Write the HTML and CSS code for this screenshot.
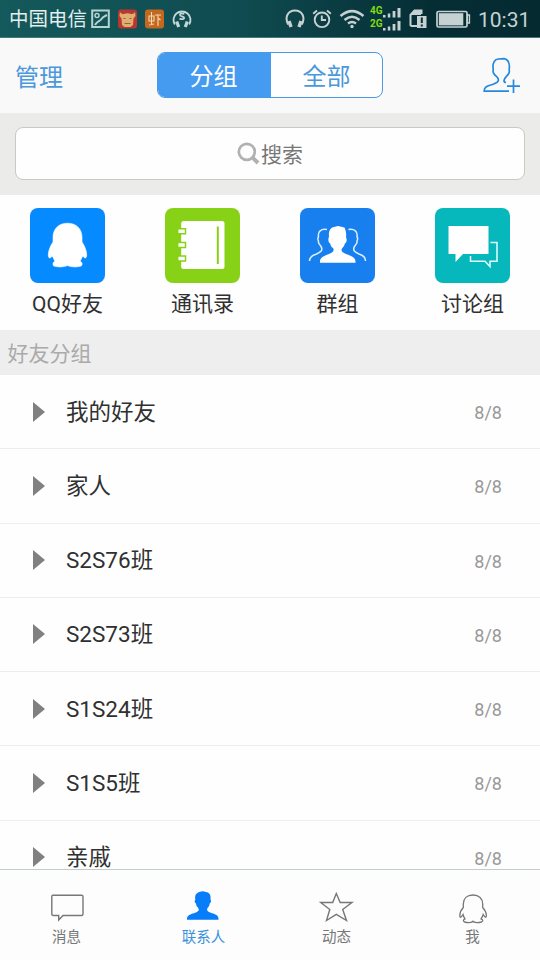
FILE: index.html
```html
<!DOCTYPE html>
<html lang="zh-CN">
<head>
<meta charset="utf-8">
<title>联系人</title>
<link rel="stylesheet" href="styles.css">
</head>
<body>
<div class="app">
  <div class="status">
    <span class="carrier">中国电信</span>
    <div class="notices">
      <svg width="19" height="20" viewBox="0 0 19 20" fill="none" stroke="#b5d3cf" stroke-width="2"><rect x="1.200" y="1.500" width="16.600" height="16.500"/><circle cx="6" cy="6.500" r="2" stroke-width="1.500"/><path d="M4 16C6 12 8.500 12.500 10 10.500C12 7.500 14 7 16 6"/></svg>
      <svg width="19" height="20" viewBox="0 0 19 20"><rect y=".5" width="19" height="19" rx="3" fill="#b93631"/><path d="M2 3Q3 5.500 6 5Q9.500 3.500 13 5Q16 5.500 17 3L17.500 7L15.500 9.500L15 16L12.500 18H6.500L4 16L3.500 9.500L1.500 7Z" fill="#dfae70"/><path d="M5.500 9.500h2M11.500 9.500h2M6.500 14.500h6" stroke="#a15a39" stroke-width="1" fill="none"/></svg>
      <svg width="19" height="20" viewBox="0 0 19 20"><rect y=".5" width="19" height="19" rx="3" fill="#c4681d"/><path d="M4 7h5v5H4zM6.500 3v13M4 16l5-1M10 6h6M13 6v11M13 9l2.500 2" fill="none" stroke="#f1d8b6" stroke-width="1.100"/></svg>
      <svg width="20" height="20" viewBox="0 0 20 20" fill="none" stroke="#c4d7d6" stroke-width="1.800"><path d="M2.800 15.500A8.500 8.500 0 1 1 17.200 15.500"/><path d="M4.700 12.500l2 5.500M15.300 12.500l-2 5.500" stroke-width="3.200"/><path d="M12.300 5Q8 3.500 8 6C8 7.800 12.300 6.800 12.200 9Q11.500 11 7.500 9.600"/></svg>
    </div>
    <div class="system">
      <svg class="phones" width="20" height="20" viewBox="0 0 20 20" fill="none" stroke="#c6d2d2" stroke-width="2"><path d="M3.200 15.500C-.8 8 3 1.500 10 1.500S20.800 8 16.800 15.500"/><path d="M4 12l2 6M16 12l-2 6" stroke-width="3.500"/></svg>
      <svg class="alarm" width="20" height="20" viewBox="0 0 20 20" fill="none" stroke="#c6d2d2" stroke-width="1.900"><circle cx="10" cy="10.800" r="7.300"/><path d="M9.800 6.500V11H14M1.200 4.700L5 1.500M15 1.500L18.800 4.700"/></svg>
      <svg class="wifi" width="26" height="20" viewBox="0 0 26 20" fill="none" stroke="#c6d2d2" stroke-width="2.500"><path d="M1.500 7Q13-2.800 24.500 7M5.500 11Q13 4.500 20.500 11M9 14.500Q13 11.500 17 14.500"/><circle cx="13" cy="17.500" r="1.700" fill="#c6d2d2" stroke="none"/></svg>
      <div class="cell">
        <div class="net"><span>4G</span><svg width="18" height="10" viewBox="0 0 18 10" fill="#c6d2d2"><path d="M0 7h2.500v2.500H0zM4.800 5.500h2.500v4H4.800zM9.600 3h2.800v6.500H9.600zM14.500 0h3v9.500h-3z"/></svg></div>
        <div class="net"><span>2G</span><svg width="18" height="10" viewBox="0 0 18 10" fill="#c6d2d2"><path d="M0 7h2.500v2.500H0zM4.800 5.500h2.500v4H4.800zM9.600 3h2.800v6.500H9.600zM14.500 0h3v9.500h-3z"/></svg></div>
      </div>
      <svg class="sim" width="18" height="20" viewBox="0 0 18 20"><path d="M1.500 17V6L5.500 1.500H12.500V5M1.500 17H8" fill="none" stroke="#c6d2d2" stroke-width="2"/><path d="M2 5.500L5.500 2H12V6H2z" fill="#c6d2d2"/><rect x="8" y="7" width="9.500" height="12" fill="#c6d2d2"/><path d="M12.800 8.500v5.500M12.800 15.500v2" stroke="#073238" stroke-width="2"/></svg>
      <svg class="battery" width="35" height="19" viewBox="0 0 35 19"><rect x="1" y="1.500" width="30" height="15.500" rx="1.500" fill="none" stroke="#c6d2d2" stroke-width="1.700"/><rect x="2.800" y="3.200" width="24.500" height="12.200" fill="#c6d2d2"/><path d="M31.500 5h2v8h-2z" fill="none" stroke="#c6d2d2" stroke-width="1.300"/></svg>
      <span class="clock">10:31</span>
    </div>
  </div>

  <header class="header">
    <span class="manage">管理</span>
    <div class="segments"><span class="segment selected">分组</span><span class="segment">全部</span></div>
    <svg class="add" width="38" height="38" viewBox="0 0 38 38" fill="none" stroke="#2689dc" stroke-width="1.700"><path d="M26 35.200H1.200C1 30.500 5 30 9.500 28.500C13.500 27.200 16.500 25.500 15 22.500C14.300 20.500 12.500 20.500 10.500 17C9.500 15.500 10.500 14.500 10.200 13C9.200 7.500 11.500 3.500 15 3L21 2.700C25.500 3.700 27 7.500 26.200 13C26 15 27 15.500 25.700 17.500C24 20.500 21.500 21.500 21 24.500Q21 26.500 23 26.500M24 30.200H37M30.500 23.500V37"/></svg>
  </header>

  <div class="search-area"><div class="search">
    <svg width="23" height="23" viewBox="0 0 23 23" fill="none" stroke="#b1b1b1"><circle cx="9.800" cy="9.800" r="8" stroke-width="2.700"/><path d="M15.500 15.500L21 21" stroke-width="4"/></svg><span>搜索</span>
  </div></div>

  <nav class="shortcuts">
    <div class="shortcut">
      <svg width="75" height="75" viewBox="0 0 75 75"><rect width="75" height="75" rx="8" fill="#058aff"/><path d="M37.500 15.200C28.500 15.200 23 21 23 29.500V34C20 38.500 18.300 43 18.300 47C18.500 50.500 20 51 22.300 48L24.800 53C22.500 54.500 22.800 56.800 23.500 57.800C26 59.300 34.500 59.300 37.500 57.500C40.500 59.300 49 59.300 51.500 57.800C52.500 56.500 52.500 54.500 50.200 53L52.800 48C55 51 56.500 50.500 56.700 47C56.700 43 55 38.500 52 34V29.500C52 21 46.500 15.200 37.500 15.200Z" fill="#fff" stroke="#fff" stroke-width=".6"/></svg>
      <span>QQ好友</span>
    </div>
    <div class="shortcut">
      <svg width="75" height="75" viewBox="0 0 75 75"><rect width="75" height="75" rx="8" fill="#87d117"/><rect x="16.200" y="13" width="43.300" height="48" rx="2.500" fill="#fff"/><path d="M52.800 18.500V56" stroke="#87d117" stroke-width="2"/><g stroke="#87d117" stroke-width="1.500"><path fill="#fff" d="M12.700 20.700h7.800v5h-7.800zM12.700 34.400h7.800v5h-7.800zM12.700 48h7.800v5h-7.800z"/></g></svg>
      <span>通讯录</span>
    </div>
    <div class="shortcut">
      <svg width="75" height="75" viewBox="0 0 75 75"><rect width="75" height="75" rx="8" fill="#187fef"/><path d="M20 54.800C19.500 49.500 23.500 48 29 46C33.500 44 34.500 42.500 33 40C31.500 39 30.500 38 30.300 35.500C28 34.500 28 30 29 29C28.300 23 30.500 19.500 34 19L38 18L44.500 19.500C46 23 46.500 26 46 29C47.200 31.500 46.800 34.500 44.800 35.500C44.500 38 43 39 42 40.500C40.500 43 42.500 44.500 46 46C52 48 56 49.500 55.500 54.800Z" fill="#fff"/><g fill="none" stroke="#dcefff" stroke-width="1.500"><path d="M27 21.500C21 20.500 17.500 23.500 18.500 29C17.500 30 17.500 31 18.500 33C18 35.500 19.500 36 21 38.500C23.500 42.500 20 44.500 16 46.200C12 47.500 9.500 49 9.500 53"/><path d="M48.500 21.500C54.500 20.500 58 23.500 57 29C58 30 58 31 57 33C57.500 35.500 56 36 54.500 38.500C52 42.500 55.500 44.500 59.500 46.200C63.500 47.500 65.500 49 65.500 53"/></g></svg>
      <span>群组</span>
    </div>
    <div class="shortcut">
      <svg width="75" height="75" viewBox="0 0 75 75"><rect width="75" height="75" rx="8" fill="#06b7bb"/><path d="M13.500 18H53.500V46H28L20.500 54V46H13.500Z" fill="#fff"/><path d="M55.500 34.500H62V53.200H55V58.500L50 53.200H35.500V48" fill="none" stroke="#e5ffff" stroke-width="1.500"/></svg>
      <span>讨论组</span>
    </div>
  </nav>

  <div class="section">好友分组</div>
  <main class="groups">
    <div class="group"><i class="arrow"></i><span class="name">我的好友</span><span class="count">8/8</span></div>
    <div class="group"><i class="arrow"></i><span class="name">家人</span><span class="count">8/8</span></div>
    <div class="group"><i class="arrow"></i><span class="name">S2S76班</span><span class="count">8/8</span></div>
    <div class="group"><i class="arrow"></i><span class="name">S2S73班</span><span class="count">8/8</span></div>
    <div class="group"><i class="arrow"></i><span class="name">S1S24班</span><span class="count">8/8</span></div>
    <div class="group"><i class="arrow"></i><span class="name">S1S5班</span><span class="count">8/8</span></div>
    <div class="group"><i class="arrow"></i><span class="name">亲戚</span><span class="count">8/8</span></div>
  </main>

  <footer class="tabs">
    <div class="tab"><svg width="36" height="34" viewBox="0 0 36 34" fill="none" stroke="#777" stroke-width="1.400"><path d="M3.800 5.200H32.500Q34 5.200 34 6.700V24Q34 25.500 32.500 25.500H14L9.700 30V25.500H4.300Q2.800 25.500 2.800 24V6.700Q2.800 5.200 3.800 5.200Z"/></svg><span>消息</span></div>
    <div class="tab active"><svg width="36" height="34" viewBox="0 0 36 34" fill="#087dfa"><path d="M2 29.700C1.500 25.500 5 24.500 9.500 23C14 21.500 14.500 20 13 17.500C11.500 16.500 11.200 15 11 13.500C9.300 12.500 9.500 11 10.300 9.500C9.500 5 11.500 2.500 15 1.700Q18 .5 21 2C24.500 2.500 26 5 25.500 9.500C26.500 11 26 12.500 24.700 13.500C24.500 15.500 23.500 17 22.500 18C21.500 20.500 22.500 21.500 26.500 23C31 24.500 34 25.500 33.500 29.700Z"/></svg><span>联系人</span></div>
    <div class="tab"><svg width="36" height="34" viewBox="0 0 36 34" fill="none" stroke="#777" stroke-width="1.400"><path d="M17.300 3.500L21.200 12.500H33L23.700 19.500L27.500 30.500L17.300 24.300L7.500 30.500L10.800 19.500L1.700 12.500H13.700Z"/></svg><span>动态</span></div>
    <div class="tab"><svg width="36" height="34" viewBox="0 0 36 34" fill="none" stroke="#777" stroke-width="1.300"><path d="M18 5C12 5 8.300 8.500 8.300 14V17.500C6 20 4.800 22.500 4.800 25.500C5 28.500 6 27.500 8 24.500Q8.500 27 10 28.800C7.500 30 8.500 31.500 9.500 32C12.500 32.800 16.500 32.500 18 31.200C19.500 32.500 23.500 32.800 26.500 32C28 31.200 28.500 30 26 28.800Q27.500 27 28.200 24.500C30 27.500 31.200 28.500 31.400 25.500C31.400 22.500 30 20 27.700 17.500V14C27.700 8.500 24 5 18 5Z"/></svg><span>我</span></div>
  </footer>
</div>
</body>
</html>
```
FILE: styles.css
```css
* { box-sizing: border-box; }

body {
  margin: 0;
  font-family: Roboto, "Noto Sans CJK SC", sans-serif;
  color: #303030;
}

svg { display: block; flex: none; }

.app {
  width: 540px;
  height: 960px;
  display: flex;
  flex-direction: column;
  overflow: hidden;
  background: #fefefe;
}

.status {
  flex: none;
  height: 38px;
  padding: 1px 10px 0 9px;
  display: flex;
  align-items: center;
  background: linear-gradient(90deg, #14595b, #0f4b50 45%, #052d34 80%, #052b31);
  border-bottom: 1px solid #477779;
  color: #e3eeee;
}

.carrier { width: 82px; padding-top: 1px; font-size: 19.5px; line-height: 36px; white-space: nowrap; }
.notices { display: flex; gap: 8px; }
.system { margin-left: auto; display: flex; align-items: center; }
.alarm { margin-left: 7px; }
.wifi { margin-left: 7px; }
.cell { margin-left: 5px; width: 31px; margin-top: -4px; }
.net {
  display: flex;
  align-items: flex-end;
  height: 13px;
  font: bold 10px/12px Roboto, sans-serif;
  color: #82dc12;
}
.net span { width: 13px; }
.net svg { margin-bottom: -1px; }
.sim { margin-left: 8px; }
.battery { margin-left: 9px; }
.clock { width: 52px; margin-left: 7px; padding-top: 1px; font-size: 21px; line-height: 36px; color: #c6d2d2; white-space: nowrap; }

.header {
  flex: none;
  height: 75px;
  padding: 0 19px 2px 15px;
  display: flex;
  align-items: center;
  background: #f9f9f9;
  font-size: 24px;
  color: #4b98dc;
}

.manage { width: 142px; padding-top: 2px; }

.segments {
  width: 226px;
  height: 46px;
  display: flex;
  border: 1px solid #4b98e6;
  border-radius: 8px;
  overflow: hidden;
  background: #fefefe;
}

.segment { flex: 1; text-align: center; line-height: 49px; }
.segment.selected { flex: 0 0 113px; padding-right: 2px; background: #459bf0; color: #fff; }
.add { margin-left: auto; }

.search-area {
  flex: none;
  height: 82px;
  padding: 14px 15px 15px;
  background: #ebebea;
}

.search {
  height: 53px;
  padding-bottom: 1px;
  display: flex;
  align-items: center;
  justify-content: center;
  gap: 1px;
  border: 1px solid #c5cbc5;
  border-radius: 8px;
  background: #fefefe;
  font-size: 21px;
  color: #777;
}

.shortcuts {
  flex: none;
  height: 135px;
  padding-top: 13px;
  display: grid;
  grid-template-columns: repeat(4, 1fr);
}

.shortcut {
  display: flex;
  flex-direction: column;
  align-items: center;
  font-size: 21px;
  line-height: 42px;
}

.section {
  flex: none;
  height: 45px;
  padding-left: 7.5px;
  background: #eeeeee;
  font-size: 21px;
  line-height: 48px;
  color: #aaa;
}

.groups { flex: 1; min-height: 0; overflow: hidden; }

.group {
  height: 74.25px;
  padding: 0 38px 0 33px;
  display: flex;
  align-items: center;
  border-bottom: 1px solid #e9f0f2;
}

.arrow {
  width: 0;
  border-left: 12px solid #808080;
  border-top: 10px solid transparent;
  border-bottom: 10px solid transparent;
}

.name { margin-left: 21px; font-size: 22.5px; line-height: 30px; }
.count { margin: 2px 0 0 auto; font-size: 18px; color: #999; }

.tabs {
  flex: none;
  height: 91px;
  padding-top: 20px;
  display: grid;
  grid-template-columns: repeat(4, 1fr);
  border-top: 1px solid #c2cec5;
  background: #fcfdfc;
}

.tab {
  display: flex;
  flex-direction: column;
  align-items: center;
  padding-right: 2px;
  font-size: 14.5px;
  line-height: 28px;
  color: #777;
}

.tab.active { padding: 0 0 0 2px; color: #3d91dc; }
.tab.active svg { margin-left: -2px; }
.tab:last-child { padding-right: 0; }
```
